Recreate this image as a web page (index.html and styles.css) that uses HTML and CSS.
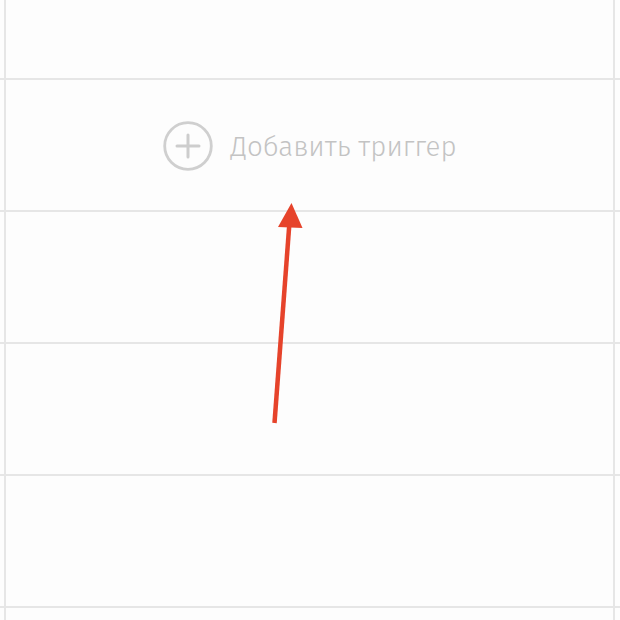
FILE: index.html
```
<!DOCTYPE html>
<html lang="ru">
<head>
  <meta charset="UTF-8" />
  <title>Триггеры</title>
  <link rel="stylesheet" href="styles.css">
</head>
<body>
  <div class="board">
    <div class="row row-top"><div class="cell"></div></div>
    <div class="row">
      <div class="cell">
        <button class="add-trigger" type="button">
          <svg class="add-icon" width="50" height="50" viewBox="0 0 50 50">
            <circle cx="25" cy="25" r="23.3" fill="none" stroke="#cfcfcf" stroke-width="2.8"/>
            <path d="M25 14v22M14 25h22" stroke="#cdcdcd" stroke-width="3" stroke-linecap="round"/>
          </svg>
          <span>Добавить триггер</span>
        </button>
      </div>
    </div>
    <div class="row"><div class="cell"></div></div>
    <div class="row"><div class="cell"></div></div>
    <div class="row"><div class="cell"></div></div>
    <div class="row row-last"><div class="cell"></div></div>
  </div>

  <!-- стрелка-подсказка -->
  <svg class="pointer" width="620" height="620" viewBox="0 0 620 620">
    <line x1="274.5" y1="423" x2="289.5" y2="222" stroke="#e6432b" stroke-width="4.5"/>
    <polygon points="291.5,203 278,227 302.5,228" fill="#e6432b"/>
  </svg>
</body>
</html>
```

FILE: styles.css
```
body {
  margin: 0;
  padding: 0;
  background: #fdfdfd;
  font-family: "Fira Sans", "Open Sans", Arial, sans-serif;
  width: 620px;
  height: 620px;
  overflow: hidden;
  position: relative;
}
.board {
  display: flex;
  flex-direction: column;
}
.row {
  height: 130px;
  border-bottom: 2px solid #e6e6e6;
  flex-shrink: 0;
}
.row-top {
  height: 78px;
}
.row-last {
  height: 12px;
  border-bottom: none;
}
.cell {
  height: 100%;
  margin: 0 5px 0 4px;
  border-left: 2px solid #e6e6e6;
  border-right: 2px solid #e6e6e6;
  display: flex;
  align-items: center;
  justify-content: center;
}
.add-trigger {
  display: flex;
  align-items: center;
  gap: 17px;
  padding: 0;
  margin: 2px 0 0 1px;
  border: none;
  background: none;
  cursor: pointer;
  color: #c3c3c3;
  font-family: inherit;
  font-size: 27.7px;
  font-weight: 300;
}
.add-icon {
  display: block;
}
.pointer {
  position: absolute;
  left: 0;
  top: 0;
  pointer-events: none;
}
```
